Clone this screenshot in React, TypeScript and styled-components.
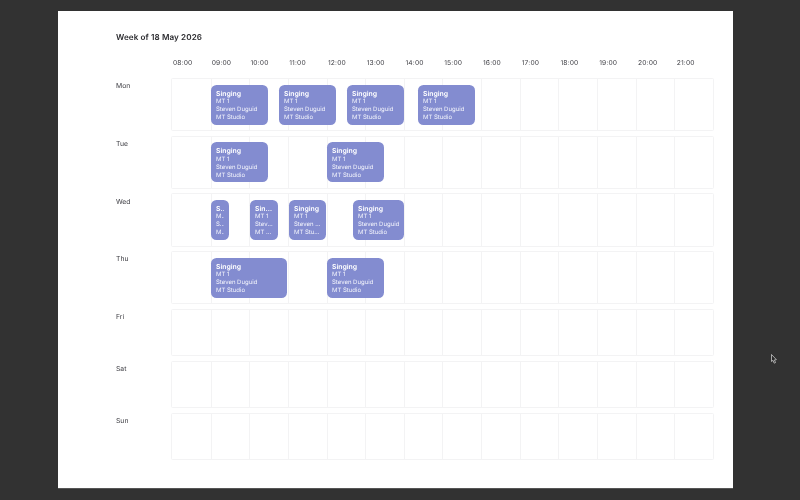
import React from "react";
import styled, { createGlobalStyle } from "styled-components";

const Global = createGlobalStyle`
  html, body { margin: 0; padding: 0; background: #323232; }
  body { font-family: Inter, "Liberation Sans", sans-serif; width: 800px; height: 500px; overflow: hidden; position: relative; text-rendering: geometricPrecision; -webkit-font-smoothing: antialiased; }
`;
const Desktop = styled.div`
  width: 800px; height: 500px; box-sizing: border-box; padding: 11px 0 0 58px; background: #323232;
`;
const Sheet = styled.main`
  width: 675px; height: 477px; box-sizing: border-box; background: #fff; padding: 20px 19px 0 58px;
  box-shadow: 0 1px 0 #555;
  filter: blur(0.25px);
`;
const Title = styled.h1`
  margin: 0; font-size: 8.1px; line-height: 12px; font-weight: 600; color: #2a2a2e; letter-spacing: 0.1px;
`;
const HoursRow = styled.div`
  display: grid; grid-template-columns: repeat(14, 38.76px); margin: 14px 0 0 55px; height: 12px;
`;
const Hour = styled.span`
  font-size: 6.7px; line-height: 12px; color: #3c3c42; padding-left: 2px; letter-spacing: 0.15px;
`;
const Days = styled.div`
  display: flex; flex-direction: column; gap: 4.5px; margin-top: 9px;
`;
const DayRow = styled.section`
  display: flex; height: ${(p) => p.$h}px;
`;
const DayLabel = styled.div`
  width: 55px; flex: none; font-size: 6.8px; line-height: 12px; color: #3c3c42; padding-top: 2.4px;
`;
const Track = styled.div`
  position: relative; width: 543px; flex: none; box-sizing: border-box; display: grid;
  grid-template-columns: repeat(14, 1fr); border: 1px solid #f3f3f4; border-radius: 1.5px;
`;
const Cell = styled.div`
  border-left: 1px solid #f3f3f4;
  &:first-child { border-left: 0; }
`;
const Event = styled.article`
  position: absolute; top: 5.5px; height: 40px; box-sizing: border-box; overflow: hidden;
  background: #838cd0; border-radius: 5.5px; padding: 4px 4.6px 0 5px; color: #fff;
  display: flex; flex-direction: column;
`;
const EventTitle = styled.div`
  font-size: 6.9px; line-height: 9.5px; font-weight: 600; white-space: nowrap; overflow: hidden; text-overflow: ellipsis;
`;
const EventLine = styled.div`
  font-size: 6px; line-height: 8px; font-weight: 400; white-space: nowrap; overflow: hidden; text-overflow: ellipsis; color: #f4f5fc;
`;
const Cursor = styled.svg`
  position: absolute; left: 771px; top: 354px; width: 6px; height: 10px;
`;

const data = [
  { d: "Mon", h: 53.2, e: [[39, 57], [107, 57], [175, 57], [246, 57]] },
  { d: "Tue", h: 53.2, e: [[39, 57], [155, 57]] },
  { d: "Wed", h: 53.2, e: [[39, 18], [78, 28], [117, 37], [181, 51]] },
  { d: "Thu", h: 53.2, e: [[39, 76], [155, 57]] },
  { d: "Fri", h: 47.5, e: [] },
  { d: "Sat", h: 47.5, e: [] },
  { d: "Sun", h: 47.5, e: [] },
];
const hours = Array.from({ length: 14 }, (_, i) => `${String(i + 8).padStart(2, "0")}:00`);

export default function App() {
  return (
    <>
      <Global />
      <Desktop>
        <Sheet>
          <Title>Week of 18 May 2026</Title>
          <HoursRow>
            {hours.map((h) => <Hour key={h}>{h}</Hour>)}
          </HoursRow>
          <Days>
            {data.map((r) => (
              <DayRow key={r.d} $h={r.h}>
                <DayLabel>{r.d}</DayLabel>
                <Track>
                  {hours.map((h) => <Cell key={h} />)}
                  {r.e.map(([l, w]) => (
                    <Event key={l} style={{ left: l, width: w }}>
                      <EventTitle>Singing</EventTitle>
                      <EventLine>MT 1</EventLine>
                      <EventLine>Steven Duguid</EventLine>
                      <EventLine>MT Studio</EventLine>
                    </Event>
                  ))}
                </Track>
              </DayRow>
            ))}
          </Days>
        </Sheet>
      </Desktop>
      <Cursor viewBox="0 0 6 10">
        <path d="M0.5 0.5 L0.5 7.5 L2 6.3 L3.2 9.2 L4.5 8.6 L3.4 5.9 L5.4 5.7 Z" fill="#2a2a2a" stroke="#ddd" strokeWidth="0.7" />
      </Cursor>
    </>
  );
}
